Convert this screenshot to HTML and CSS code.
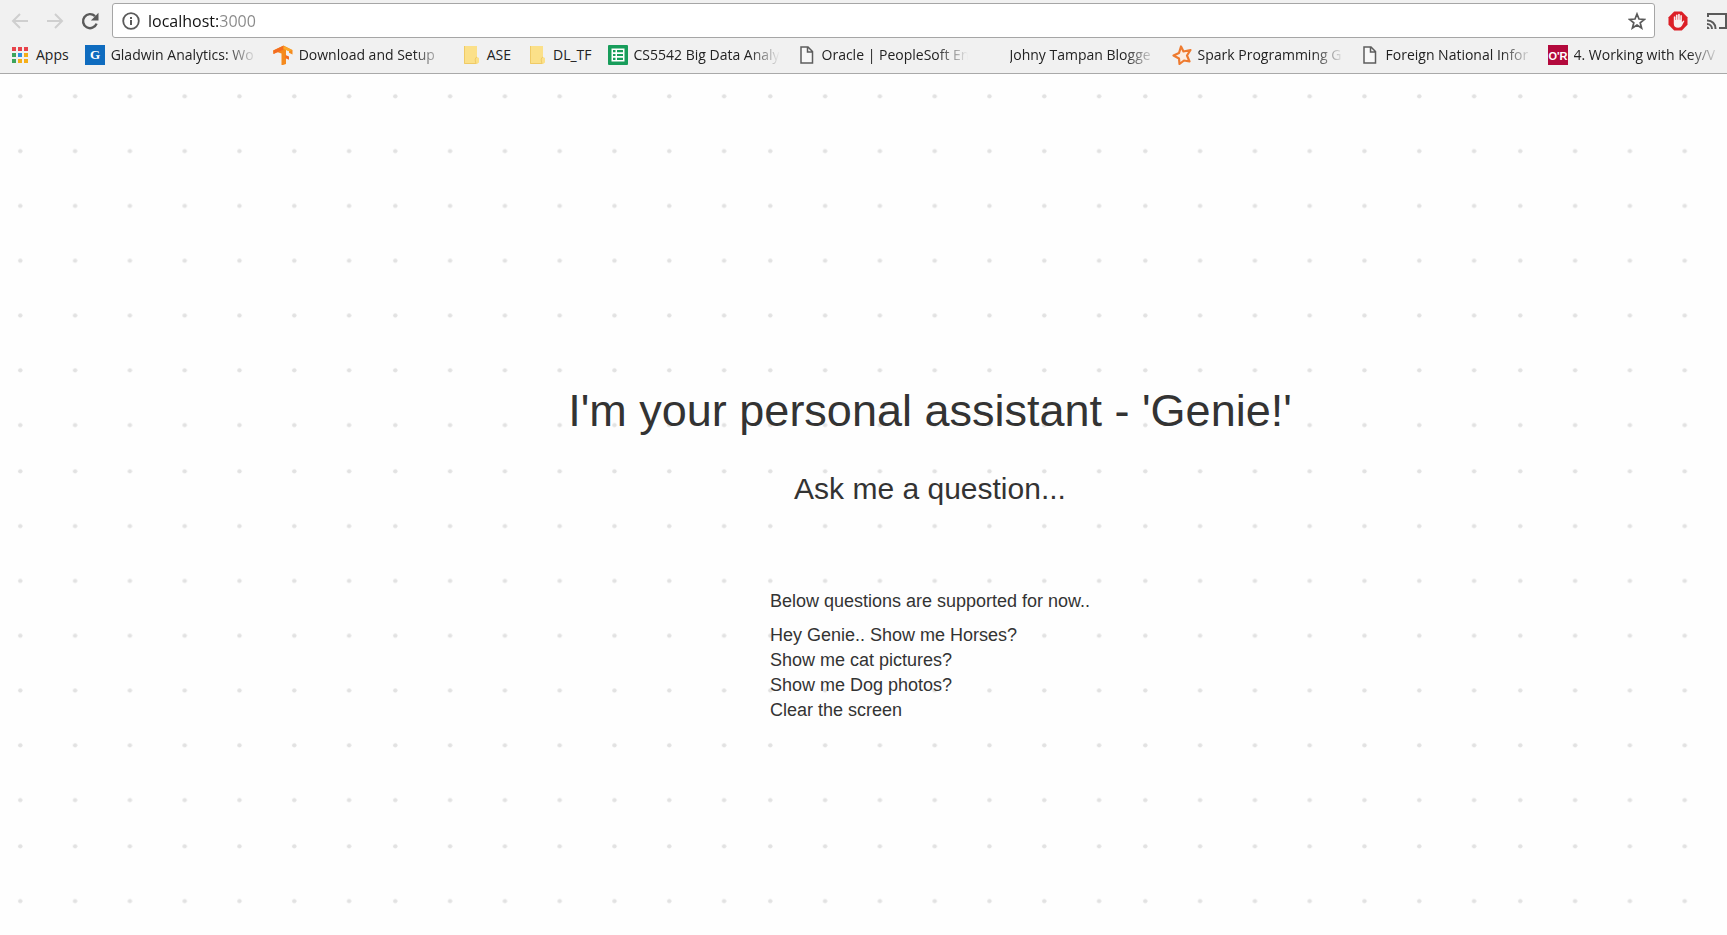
FILE: index.html
```html
<!DOCTYPE html>
<html lang="en">
<head>
<meta charset="utf-8">
<title>Genie</title>
<link rel="stylesheet" href="styles.css">
</head>
<body>
<header class="browser">
  <div class="toolbar">
    <button class="tool" type="button" aria-label="Back" disabled>
      <svg width="20" height="20" viewBox="0 0 20 20" fill="none" stroke="#cfcfcf" stroke-width="2"><path d="M18 10H3M10 3l-7 7 7 7"/></svg>
    </button>
    <button class="tool" type="button" aria-label="Forward" disabled>
      <svg width="20" height="20" viewBox="0 0 20 20" fill="none" stroke="#cfcfcf" stroke-width="2"><path d="M2 10h15M10 3l7 7-7 7"/></svg>
    </button>
    <button class="tool" type="button" aria-label="Reload">
      <svg width="20" height="20" viewBox="0 0 20 20"><path d="M16.6 12.6A7 7 0 1 1 15 5.2" fill="none" stroke="#5a5a5a" stroke-width="2.4"/><path d="M18.5 1.8v7.6h-7.6z" fill="#5a5a5a"/></svg>
    </button>
    <div class="omnibox">
      <svg width="18" height="18" viewBox="0 0 18 18"><circle cx="9" cy="9" r="7.8" fill="none" stroke="#5a5a5a" stroke-width="1.8"/><path d="M8 8h2v5H8zM8 5h2v2H8z" fill="#5a5a5a"/></svg>
      <input class="address" type="text" value="localhost:3000" aria-label="Address" spellcheck="false">
      <button class="star" type="button" aria-label="Bookmark this page">
        <svg width="18" height="18" viewBox="0 0 18 18"><path d="M9 2l2 5 5.4.4-4.2 3.4 1.4 5.2L9 13.100l-4.600 2.900 1.400-5.200L1.600 7.400 7 7z" fill="none" stroke="#5a5a5a" stroke-width="1.700"/></svg>
      </button>
    </div>
    <div class="extensions">
      <button class="tool" type="button" aria-label="Ad blocker">
        <svg width="20" height="20" viewBox="0 0 20 20"><path d="M6.200.5h7.600l5.700 5.700v7.600l-5.700 5.700H6.200L.5 13.800V6.200z" fill="#dc1f26"/><path d="M5.800 10V5.800q.8-1 1.600 0V9h.5V4q.9-1 1.700 0v4.800h.5V3.300q.9-1 1.700 0v5.500h.5V4.600q.8-1 1.600 0v6.600l1-1.300q1-.7 1.500.2l-2.500 4.600q-1 2.100-3.700 2.100-4.400 0-4.400-4z" fill="#f7eeee"/></svg>
      </button>
      <button class="tool cast" type="button" aria-label="Cast">
        <svg width="22" height="18" viewBox="0 0 22 18" fill="none" stroke="#5a5a5a" stroke-width="2"><path d="M1 5V2h18v14h-7"/><path d="M0 8.500a8 8 0 0 1 8.500 8.500M0 12a5 5 0 0 1 5 5"/><path d="M0 14.500a2.500 2.500 0 0 1 2.500 2.500H0z" fill="#5a5a5a" stroke="none"/></svg>
      </button>
    </div>
  </div>
  <nav class="bookmarks" aria-label="Bookmarks">
    <a class="bookmark" href="#">
      <svg class="icon" viewBox="0 0 20 20"><path d="M2 2h4v4H2zM8 2h4v4H8zM14 2h4v4h-4z" fill="#e8434b"/><path d="M2 8h4v4H2zM2 14h4v4H2z" fill="#3da45c"/><path d="M8 8h4v4H8z" fill="#2f8fe0"/><path d="M14 8h4v4h-4zM8 14h4v4H8zM14 14h4v4h-4z" fill="#f5ae19"/></svg>
      <span>Apps</span></a>
    <a class="bookmark" href="#">
      <svg class="icon" viewBox="0 0 20 20"><path d="M0 0h20v20H0z" fill="#0f6cbf"/><text class="serif-mark" x="10" y="14" text-anchor="middle">G</text></svg>
      <span class="long">Gladwin Analytics: Wo</span></a>
    <a class="bookmark" href="#">
      <svg class="icon" viewBox="0 0 20 20"><path d="M0 5.500L10.500.5l9 4.500v4.500l-3.500-1.700V6l-3-1.300V19l-4.500 1.500V8.500L4 7 .5 9z" fill="#f58a1d"/><path d="M.5 5.500L10.500.8v3.700L4 7.400.5 9z" fill="#f36c21"/><path d="M12.500 10l3.500 1.500v3.300l-3.500-1.600z" fill="#f36c21"/><path d="M10.500 1l8.500 4-2.500 1.500-6-2.500z" fill="#fba928"/></svg>
      <span class="long">Download and Setup</span></a>
    <a class="bookmark" href="#">
      <svg class="icon" viewBox="0 0 20 20"><path d="M3 1h13v11l2 1v4.500l-2 1.500H3z" fill="#fbe089"/><path d="M16 12q-3 1-1 6.500M3.500 1v17.500H15" fill="none" stroke="#efca66"/></svg>
      <span>ASE</span></a>
    <a class="bookmark" href="#">
      <svg class="icon" viewBox="0 0 20 20"><path d="M3 1h13v11l2 1v4.500l-2 1.500H3z" fill="#fbe089"/><path d="M16 12q-3 1-1 6.500M3.500 1v17.500H15" fill="none" stroke="#efca66"/></svg>
      <span>DL_TF</span></a>
    <a class="bookmark" href="#">
      <svg class="icon" viewBox="0 0 20 20"><rect width="20" height="20" rx="1" fill="#189d5b"/><path d="M3.500 3.500h13v13h-13z" fill="#fff"/><path d="M5 5h2.500v2.200H5zM9 5h6v2.200H9zM5 8.900h2.500v2.200H5zM9 8.900h6v2.200H9zM5 12.800h2.500V15H5zM9 12.800h6V15H9z" fill="#189d5b"/></svg>
      <span class="long">CS5542 Big Data Analy</span></a>
    <a class="bookmark" href="#">
      <svg class="icon" viewBox="0 0 20 20"><path d="M5 2h7l4.500 4.500V18H5zM11.500 2v5h5" fill="#f8f8f8" stroke="#5d5d5d" stroke-width="1.500"/></svg>
      <span class="long">Oracle | PeopleSoft En</span></a>
    <a class="bookmark" href="#">
      <svg class="icon" viewBox="0 0 20 20"></svg>
      <span class="long">Johny Tampan Blogge</span></a>
    <a class="bookmark" href="#">
      <svg class="icon" viewBox="0 0 20 20"><path d="M9 1.500l2.500 5L18.500 5l-3.500 5.500 2.500 6-5.500-1L7.500 19l-.5-5.500-5.500-3L7 8z" fill="#fbeee4" stroke="#ee7b30" stroke-width="2.200" stroke-linejoin="round"/></svg>
      <span class="long">Spark Programming G</span></a>
    <a class="bookmark" href="#">
      <svg class="icon" viewBox="0 0 20 20"><path d="M4 2h7l4.500 4.500V18H4zM10.500 2v5h5" fill="#f8f8f8" stroke="#5d5d5d" stroke-width="1.500"/></svg>
      <span class="long">Foreign National Infor</span></a>
    <a class="bookmark" href="#">
      <svg class="icon" viewBox="0 0 20 20"><path d="M0 0h20v20H0z" fill="#b3093c"/><text class="sans-mark" x="10" y="15" text-anchor="middle">O'R</text></svg>
      <span class="long">4. Working with Key/V</span></a>
  </nav>
</header>
<main class="page">
  <h1 class="title">I'm your personal assistant - 'Genie!'</h1>
  <h2 class="prompt">Ask me a question...</h2>
  <section class="help">
    <p class="help-intro">Below questions are supported for now..</p>
    <ul class="questions">
      <li>Hey Genie.. Show me Horses?</li>
      <li>Show me cat pictures?</li>
      <li>Show me Dog photos?</li>
      <li>Clear the screen</li>
    </ul>
  </section>
</main>
</body>
</html>
```

FILE: styles.css
```css
* {
  box-sizing: border-box;
}

body {
  margin: 0;
  min-height: 100vh;
  display: flex;
  flex-direction: column;
  overflow-x: hidden;
  background: #fefefe;
}

button {
  padding: 0;
  border: 0;
  background: none;
  display: flex;
}

svg {
  display: block;
  flex: none;
}

/* Browser bars */
.browser {
  background: #f1f1f1;
  border-bottom: 1px solid #a9a9a9;
  font-family: "Open Sans", "Noto Sans", sans-serif;
  overflow: hidden;
}

.toolbar {
  display: flex;
  align-items: center;
  padding: 3px 0 0 10px;
}

.tool {
  width: 20px;
  margin-right: 15px;
}

.omnibox {
  flex: 1;
  min-width: 0;
  height: 35px;
  margin-left: -3px;
  padding: 0 8px 0 9px;
  display: flex;
  align-items: center;
  gap: 8px;
  background: #fff;
  border: 1px solid #a6a6a6;
  border-radius: 3px;
}

.address {
  flex: 1;
  min-width: 0;
  padding: 0;
  border: 0;
  outline: 0;
  font: 16px/24px "Open Sans", "Noto Sans", sans-serif;
  /* Host in black, port in grey */
  background: linear-gradient(90deg, #111 70px, #888 70px);
  background-clip: text;
  -webkit-background-clip: text;
  -webkit-text-fill-color: transparent;
}

.extensions {
  display: flex;
  align-items: center;
  gap: 4px;
  padding-left: 13px;
}

.extensions .cast {
  margin-right: 0;
}

.bookmarks {
  display: flex;
  gap: 16px;
  padding: 7px 10px 8px;
}

.bookmark {
  flex: none;
  display: flex;
  align-items: center;
  gap: 6px;
  color: #222;
  font-size: 14px;
  line-height: 20px;
  text-decoration: none;
  white-space: nowrap;
}

.icon {
  width: 20px;
  height: 20px;
}

.long {
  width: 146px;
  overflow: hidden;
  -webkit-mask-image: linear-gradient(90deg, #000 115px, transparent 146px);
  mask-image: linear-gradient(90deg, #000 115px, transparent 146px);
}

.serif-mark {
  font: bold 13px "Liberation Serif", serif;
  fill: #fff;
}

.sans-mark {
  font: bold 11px "Liberation Sans", sans-serif;
  fill: #fff;
}

/* Page */
.page {
  flex: 1;
  display: flex;
  flex-direction: column;
  align-items: center;
  padding: 312px 0 40px 133px;
  color: #333;
  font: 18px/25px "Liberation Sans", Arial, sans-serif;
  background-image: url("data:image/svg+xml,%3Csvg xmlns='http://www.w3.org/2000/svg' width='375' height='375'%3E%3Cdefs%3E%3Cpattern id='d' width='54.8' height='54.8' patternUnits='userSpaceOnUse'%3E%3Ccircle cx='20.3' cy='20.3' r='2.2' fill='%23e2e2e2'/%3E%3C/pattern%3E%3C/defs%3E%3Crect width='375' height='375' fill='url(%23d)'/%3E%3C/svg%3E");
  background-position: 0 2px;
}

.title {
  margin: 0 0 36px;
  font-size: 45px;
  line-height: 50px;
  font-weight: 400;
}

.prompt {
  margin: 0 0 84px;
  font-size: 30px;
  line-height: 33px;
  font-weight: 400;
}

.help-intro {
  margin: 0 0 9px;
}

.questions {
  margin: 0;
  padding: 0;
  list-style: none;
}
```
